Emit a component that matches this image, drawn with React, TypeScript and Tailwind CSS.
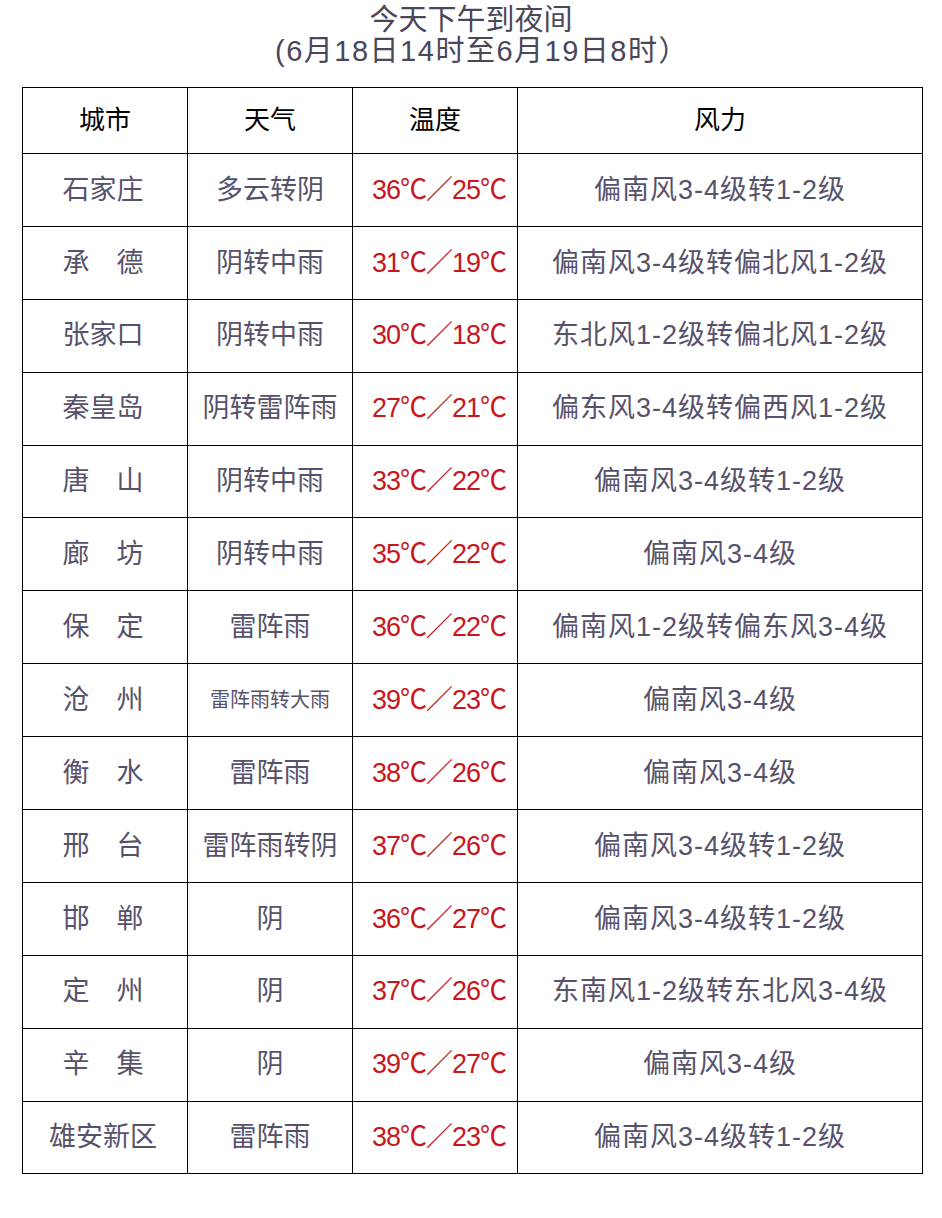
const rows: [string, string, string, string, boolean?][] = [
  ["石家庄", "多云转阴", "36℃／25℃", "偏南风3-4级转1-2级"],
  ["承　德", "阴转中雨", "31℃／19℃", "偏南风3-4级转偏北风1-2级"],
  ["张家口", "阴转中雨", "30℃／18℃", "东北风1-2级转偏北风1-2级"],
  ["秦皇岛", "阴转雷阵雨", "27℃／21℃", "偏东风3-4级转偏西风1-2级"],
  ["唐　山", "阴转中雨", "33℃／22℃", "偏南风3-4级转1-2级"],
  ["廊　坊", "阴转中雨", "35℃／22℃", "偏南风3-4级"],
  ["保　定", "雷阵雨", "36℃／22℃", "偏南风1-2级转偏东风3-4级"],
  ["沧　州", "雷阵雨转大雨", "39℃／23℃", "偏南风3-4级", true],
  ["衡　水", "雷阵雨", "38℃／26℃", "偏南风3-4级"],
  ["邢　台", "雷阵雨转阴", "37℃／26℃", "偏南风3-4级转1-2级"],
  ["邯　郸", "阴", "36℃／27℃", "偏南风3-4级转1-2级"],
  ["定　州", "阴", "37℃／26℃", "东南风1-2级转东北风3-4级"],
  ["辛　集", "阴", "39℃／27℃", "偏南风3-4级"],
  ["雄安新区", "雷阵雨", "38℃／23℃", "偏南风3-4级转1-2级"],
];

export default function App() {
  return (
    <div className="w-[942px] h-[1218px] bg-white font-['Liberation_Sans','Noto_Sans_CJK_SC',sans-serif]">
      {/* title */}
      <div className="pt-[5px] text-center text-[29px] leading-[31px] text-[#4b4659]">
        <p>今天下午到夜间</p>
        <p className="pl-[22px] tracking-[1.5px]">(6月18日14时至6月19日8时）</p>
      </div>

      <table className="ml-[22px] mt-[20px] w-[901px] table-fixed border-collapse border-[1.5px] border-black">
        <colgroup>
          <col className="w-[165px]" />
          <col className="w-[165px]" />
          <col className="w-[165px]" />
          <col />
        </colgroup>
        <thead>
          <tr className="h-[66px] text-[26px] text-black">
            <th className="border-[1.5px] border-black font-normal">城市</th>
            <th className="border-[1.5px] border-black font-normal">天气</th>
            <th className="border-[1.5px] border-black font-normal">温度</th>
            <th className="border-[1.5px] border-black font-normal">风力</th>
          </tr>
        </thead>
        <tbody>
          {rows.map(([city, weather, temp, wind, small]) => (
            <tr key={city} className="h-[72.9px] text-[27px] text-[#57526b]">
              <td className="border-[1.5px] border-black pr-[4px] text-center">{city}</td>
              <td className={"border-[1.5px] border-black text-center " + (small ? "text-[20px]" : "")}>
                {weather}
              </td>
              <td className="border-[1.5px] border-black pl-[8px] text-center text-[#c8161d] tracking-[-1px]">{temp}</td>
              <td className="border-[1.5px] border-black text-center tracking-[1px]">{wind}</td>
            </tr>
          ))}
        </tbody>
      </table>
    </div>
  );
}
